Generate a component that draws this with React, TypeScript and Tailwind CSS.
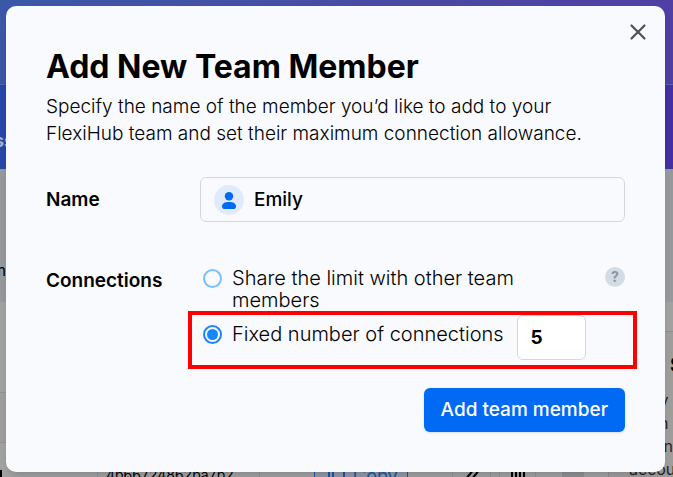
import { useState } from "react";
import { X } from "lucide-react";

function UserIcon() {
    return (
        <svg viewBox="0 0 30 30" className="h-[30px] w-[30px] shrink-0" aria-hidden="true">
            <circle cx="15" cy="15" r="15" fill="#e0eafb" />
            <circle cx="15" cy="11.3" r="4.2" fill="#006af5" />
            <path d="M8 21.200c0-2.700 3-4.200 7-4.200s7 1.500 7 4.200c0 1.900-.9 2.800-2.600 2.800h-8.800C8.900 24 8 23.100 8 21.200z" fill="#006af5" />
        </svg>
    );
}

// Dimmed team page behind the dialog
function Backdrop() {
    return (
        <div className="absolute inset-0 flex flex-col overflow-hidden bg-[#a3a3a3] text-[#20242c]" aria-hidden="true">
            <div className="h-[85px] shrink-0 border-b border-[#5a66ac] bg-linear-to-r from-[#3a58a8] to-[#513fa3]" />
            <div className="flex h-[84px] shrink-0 items-center bg-linear-to-r from-[#2747ab] to-[#4630a4] pb-7 pt-14">
                <span className="-ml-1.5 text-lg font-bold leading-5 text-[#a9b2cf]">ss</span>
            </div>
            <div className="flex h-[133px] shrink-0 items-end bg-[#979b9e] pb-5">
                <span className="-ml-2 text-base text-black">m</span>
            </div>
            <div className="flex min-h-0 flex-1">
                <div className="flex min-w-0 flex-1 flex-col">
                    <div className="h-[91px] shrink-0 border-b border-[#92949c]" />
                    <div className="h-[50px] shrink-0 border-b border-[#92949c] bg-[#a09f9e]" />
                    <div className="flex h-[50px] shrink-0 items-center whitespace-nowrap text-base text-black">
                        <div className="mt-6 h-5 w-[2px] bg-black" />
                        <div className="ml-[95px] flex h-full w-[163px] items-center border-x border-[#92949c] pl-2 pt-3.5 text-sm">4b66724862ba7b2</div>
                        <div className="ml-[54px] flex h-full w-[94px] items-center gap-2 border-x border-[#1c56a8] bg-[#929ca8] pl-3 pt-4 text-lg text-[#1c56a8]">
                            <svg viewBox="0 0 18 18" className="h-[18px] w-[18px]" fill="none" stroke="currentColor" strokeWidth="2">
                                <path d="M6 4h11v11H6zM2 1v16h12" />
                            </svg>
                            Copy
                        </div>
                        <div className="ml-11 flex h-full w-[39px] items-center justify-center border-x border-[#92949c] pt-4">
                            <svg viewBox="0 0 18 18" className="h-[18px] w-[18px]" fill="none" stroke="currentColor" strokeWidth="2">
                                <path d="M2 13 12 1M8 13 18 1" />
                            </svg>
                        </div>
                        <div className="ml-2 flex h-full w-[37px] items-center justify-center border-x border-[#92949c] pt-4">
                            <svg viewBox="0 0 18 18" className="h-[18px] w-[18px]" fill="none" stroke="currentColor" strokeWidth="2">
                                <path d="M3 1v16h12V1M7 1v13M11 1v13" />
                            </svg>
                        </div>
                        <div className="ml-[26px] h-full w-[22px] bg-[#8f9194]" />
                    </div>
                </div>
                <div className="mt-[29px] w-[65px] shrink-0 border-l border-t border-[#8e9093] bg-[#a09f9e] pl-5">
                    <p className="mt-[21px] text-right text-xl font-bold leading-6">
                        <span className="-mr-2.5 text-black">S</span>
                    </p>
                    <div className="mt-3 text-base leading-[23px]">
                        <p className="text-right">y&nbsp;</p>
                        <p className="text-right">n&nbsp;</p>
                        <p className="text-right">n</p>
                        <p>accou</p>
                    </div>
                </div>
            </div>
        </div>
    );
}

const radioClass =
    "mt-[2px] h-[19px] w-[19px] shrink-0 appearance-none rounded-full border-2 border-[#7abfff] bg-clip-content p-[2px] checked:border-[#1588ff] checked:bg-[#1588ff]";

export default function App() {
    const [name, setName] = useState("Emily");
    const [mode, setMode] = useState("fixed");
    const [limit, setLimit] = useState("5");

    return (
        <div className="relative min-h-screen pt-1.5 pr-2 pb-[5px] pl-1.5 font-['Inter',sans-serif] text-black">
            <Backdrop />

            <div role="dialog" aria-labelledby="title" className="relative rounded-[10px] bg-[#f9fafd] px-10 pt-[41px] pb-10 shadow-lg">
                <button type="button" aria-label="Close" className="absolute top-3 right-[13px] flex h-7 w-7 items-center justify-center text-[#505050]">
                    <X size={26} strokeWidth={2} />
                </button>

                <h1 id="title" className="text-[32px] leading-10 font-bold">Add New Team Member</h1>
                <p className="mt-1.5 text-[19px] leading-[27px] font-light">
                    Specify the name of the member you’d like to add to your
                    <br />
                    FlexiHub team and set their maximum connection allowance.
                </p>

                <form onSubmit={(e) => e.preventDefault()}>
                    <div className="mt-[30px] flex items-center">
                        <label htmlFor="name" className="w-[154px] shrink-0 text-[19px] leading-[22px] font-semibold">Name</label>
                        <div className="flex h-[45px] min-w-0 flex-1 items-center gap-2.5 rounded-md border border-[#d5d7db] px-[13px]">
                            <UserIcon />
                            <input
                                id="name"
                                value={name}
                                onChange={(e) => setName(e.target.value)}
                                className="min-w-0 flex-1 bg-transparent pt-[2px] text-[19px] font-medium outline-none"
                            />
                        </div>
                    </div>

                    <div role="radiogroup" aria-labelledby="connections" className="mt-[45px] flex items-start">
                        <span id="connections" className="w-[154px] shrink-0 pt-[3px] text-[19px] leading-[22px] font-semibold">Connections</span>
                        <div className="min-w-0 flex-1 text-xl leading-[22px] font-light">
                            <div className="flex items-start">
                                <label className="flex min-w-0 flex-1 items-start gap-2.5 pr-7 pl-[3px]">
                                    <input type="radio" name="mode" checked={mode === "share"} onChange={() => setMode("share")} className={radioClass} />
                                    Share the limit with other team members
                                </label>
                                <button type="button" aria-label="Help" className="h-5 w-5 shrink-0 rounded-full bg-[#d3dce4] text-sm leading-5 font-bold text-[#8a959d]">?</button>
                            </div>

                            <div className="-mx-3 flex h-[58px] items-start border-4 border-[#ff0000] pl-[11px]">
                                <label className="flex items-start gap-2.5 pt-2">
                                    <input type="radio" name="mode" checked={mode === "fixed"} onChange={() => setMode("fixed")} className={radioClass} />
                                    Fixed number of connections
                                </label>
                                <input
                                    aria-label="Number of connections"
                                    value={limit}
                                    onChange={(e) => setLimit(e.target.value)}
                                    className="ml-[13px] h-[45px] w-[69px] rounded-md border border-[#d5d7db] bg-white px-[13px] text-[19px] font-bold outline-none"
                                />
                            </div>
                        </div>
                    </div>

                    <div className="mt-[19px] flex justify-end">
                        <button type="submit" className="h-11 rounded-md bg-[#006af5] px-[17px] text-[19px] font-medium text-white shadow-sm">Add team member</button>
                    </div>
                </form>
            </div>
        </div>
    );
}
